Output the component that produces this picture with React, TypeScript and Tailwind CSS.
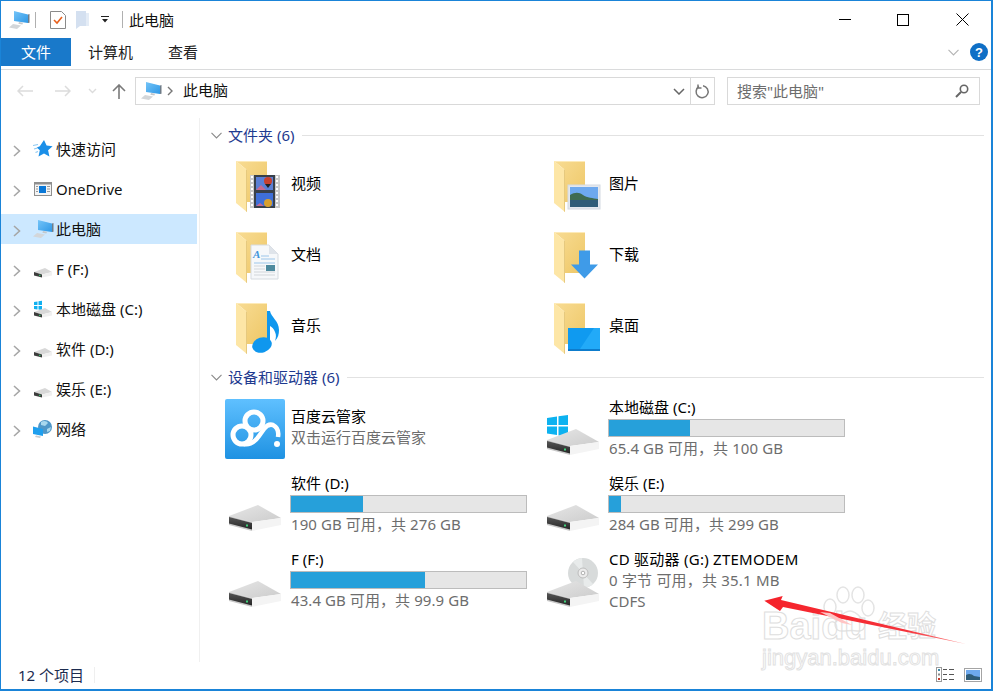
import React from "react";

const Chevron = () => (
  <svg width="8" height="12" viewBox="0 0 8 12" className="shrink-0" fill="none" stroke="#a6a6a6" strokeWidth="1.6">
    <path d="M1 1l5.500 5L1 11" />
  </svg>
);

const ChevronDown = ({ color = "#8a8a8a", w = 11 }: { color?: string; w?: number }) => (
  <svg width={w} height="7" viewBox="0 0 11 7" fill="none" stroke={color} strokeWidth="1.1">
    <path d="M.5 .8L5.500 6l5-5.200" />
  </svg>
);

const Computer = () => (
  <svg width="21" height="18" viewBox="0 0 21 18">
    <defs>
      <linearGradient id="cm" x1="0" y1="0" x2="1" y2="1">
        <stop offset="0" stopColor="#74c4f8" />
        <stop offset="1" stopColor="#2f98e6" />
      </linearGradient>
    </defs>
    <path d="M5 0l14 3.500v8.500L5 10z" fill="url(#cm)" />
    <path d="M19 3.500l1.500-.4v8.700L19 12z" fill="#6f7c88" />
    <path d="M10 11l4 .7-.6 1.800-4-.7z" fill="#c4c8cc" />
    <path d="M4 13l8 1.500-4 3.500L0 16.500z" fill="#d3d6d9" />
  </svg>
);

const SmallDrive = ({ win }: { win?: boolean }) => (
  <svg width="20" height="20" viewBox="0 0 20 20">
    {win && (
      <g fill="#10b0f0">
        <path d="M1 3l3.500-.5V6H1zM5.500 2.300L9 1.800V6H5.500zM1 7h3.500v3.500L1 10zM5.500 7H9v4l-3.500-.5z" />
      </g>
    )}
    <path d="M1 13l11-4 7 4-10 2.500z" fill="#d8d8d8" />
    <path d="M1 13v3.500l8 2v-3z" fill="#3c3c3c" />
    <path d="M9 15.500l10-2.500v3.500l-10 2z" fill="#f0f0f0" />
    <rect x="6" y="15.800" width="1.500" height="1.200" fill="#38c26a" />
  </svg>
);

const Star = () => (
  <svg width="20" height="18" viewBox="0 0 20 18">
    <path d="M11 0l2.600 5.600 6 .7-4.500 4 1.300 6.200L11 13.400 5.500 16.500l1.300-6.200-3-2.700 3-1.300z" fill="#1a8fe8" />
    <path d="M0 5.500l5-1M1 9l3.500-1M2.500 12.500l2.500-1" stroke="#8cc8f2" strokeWidth="1.200" />
  </svg>
);

const OneDrive = () => (
  <svg width="18" height="14" viewBox="0 0 18 14">
    <rect x=".5" y=".5" width="17" height="13" fill="#f4f4f4" stroke="#8f8f8f" />
    <rect x="1" y="1" width="16" height="1.500" fill="#8f8f8f" />
    <rect x="5" y="4" width="7" height="7" fill="#0a78d7" />
    <path d="M2 4.500h2M2 7h2M2 9.500h2M13 4.500h3M13 7h3M13 9.500h3" stroke="#9a9a9a" />
  </svg>
);

const Network = () => (
  <svg width="20" height="19" viewBox="0 0 20 19">
    <circle cx="12" cy="7" r="7" fill="#4f97c8" />
    <path d="M8 2c3-2 6-1 7 1l-3 3-4-1zM14 9l4-2-1 4-3 1z" fill="#a8d8ee" />
    <path d="M0 6.500l10 2.500v7L0 14z" fill="#1f9fee" />
    <path d="M3 15.500l5 1-1 1.500-5-1z" fill="#c8ccd0" />
  </svg>
);

const Folder = ({ children }: { children?: React.ReactNode }) => (
  <svg width="60" height="60" viewBox="0 0 60 60" className="shrink-0">
    <defs>
      <linearGradient id="fb" x1="0" y1="0" x2="1" y2="1">
        <stop offset="0" stopColor="#f8dc94" />
        <stop offset="1" stopColor="#eec766" />
      </linearGradient>
    </defs>
    <path d="M11 5h31v41H22V14z" fill="url(#fb)" />
    <path d="M11 5h31v1H12z" fill="#fdeab8" />
    <path d="M11 5l11 9v42l-11-9z" fill="#fde6a6" />
    <path d="M22 14v42l-1-.7V13z" fill="#e6c97e" />
    {children}
  </svg>
);

const Video = () => (
  <g>
    <rect x="25" y="19" width="30" height="33" fill="#c9c9c9" />
    <rect x="29" y="19" width="21" height="33" fill="#38404a" />
    <rect x="31" y="21" width="17" height="13" fill="#5b7fd6" />
    <rect x="31" y="37" width="17" height="13" fill="#3f6fd8" />
    <circle cx="43" cy="25" r="4" fill="#c8402e" />
    <path d="M40 28l3 4 3-4z" fill="#222" />
    <circle cx="43" cy="47" r="4" fill="#d8a02e" />
    <path d="M31 34l5-5 5 5zM31 50l4-3 4 3z" fill="#c46a92" />
    <path d="M26 21h2M26 25h2M26 29h2M26 33h2M26 37h2M26 41h2M26 45h2M26 49h2M51 21h2M51 25h2M51 29h2M51 33h2M51 37h2M51 41h2M51 45h2M51 49h2" stroke="#fff" strokeWidth="2" />
  </g>
);

const Doc = () => (
  <g>
    <path d="M26 18h18l9 9v25H26z" fill="#f6f8fa" stroke="#d6dbe0" />
    <path d="M44 18l9 9h-9z" fill="#dfe4ea" />
    <text x="28" y="31" fontSize="11" fontStyle="italic" fontWeight="700" fill="#3f95dc" fontFamily="Liberation Serif, serif">A</text>
    <path d="M36 29h8M36 32h14M29 36h21" stroke="#9cc6ea" />
    <path d="M29 39h11M29 42h11M29 45h21M29 48h21" stroke="#d2d6da" />
    <rect x="41" y="38" width="9" height="6" fill="#4e8a9e" />
  </g>
);

const Music = () => (
  <g fill="#0f97ee">
    <ellipse cx="37" cy="47" rx="10" ry="7.500" transform="rotate(-18 37 47)" />
    <path d="M42 13h3c1 6 9 10 9 19 0 4-1 8-4 11 1-3 1.500-6 0-9-1-3-3-5-5-6v20h-3z" />
  </g>
);

const Picture = () => (
  <g>
    <rect x="25" y="29" width="32" height="24" fill="#e4e8ee" stroke="#d4dae2" />
    <rect x="27" y="31" width="28" height="20" fill="#6ea9ee" />
    <path d="M27 39c5-3 9-3 13 0 4 3 10 3 15 4v1H27z" fill="#3f6b50" />
    <rect x="27" y="44" width="28" height="7" fill="#2f5c78" />
  </g>
);

const Down = () => <path d="M36 23.500h11v14h8L41.500 51.500 28 37.500h8z" fill="#3f9be8" />;

const Desktop = () => (
  <g>
    <rect x="25" y="30" width="32" height="23" fill="#0f9af0" />
    <path d="M37 51l14-21h6v21z" fill="#2bb0fb" opacity=".7" />
    <rect x="25" y="51" width="32" height="2" fill="#0d7ccc" />
  </g>
);

const Drive = ({ children }: { children?: React.ReactNode }) => (
  <svg width="60" height="60" viewBox="0 0 60 60" className="shrink-0">
    <defs>
      <linearGradient id="dt" x1="0" y1="0" x2="1" y2="1">
        <stop offset="0" stopColor="#e6e6e6" />
        <stop offset="1" stopColor="#cccccc" />
      </linearGradient>
      <linearGradient id="df" x1="0" y1="0" x2="0" y2="1">
        <stop offset="0" stopColor="#555" />
        <stop offset="1" stopColor="#262626" />
      </linearGradient>
    </defs>
    {children}
    <path d="M4 43l29-11 23 13-29 4z" fill="url(#dt)" />
    <path d="M4 43l23 6v9L4 52z" fill="#c8c8c8" />
    <path d="M4 44l23 6v6.500L4 50.500z" fill="url(#df)" />
    <path d="M27 49l29-4v7l-29 6z" fill="#f4f4f4" />
    <rect x="21" y="51.500" width="2" height="2" fill="#3fd07a" />
  </svg>
);

const WinLogo = () => (
  <path d="M4 21l10-1.500V28H4zM15.500 19.300L25 18v10h-9.500zM4 29.500h10V38L4 36.500zM15.500 29.500H25V40l-9.500-1.500z" fill="#0db2f0" />
);

const Cd = () => (
  <g>
    <circle cx="40" cy="24" r="15" fill="#d8dbdb" />
    <path d="M40 24L30 13a15 15 0 0 1 9-4zM40 24l10 11a15 15 0 0 1-9 4z" fill="#e8ebeb" />
    <circle cx="40" cy="24" r="5" fill="#ececec" stroke="#bcbcbc" />
    <circle cx="40" cy="24" r="1.800" fill="#fff" stroke="#b0b0b0" />
  </g>
);

const BaiduCloud = () => (
  <svg width="60" height="60" viewBox="0 0 60 60" className="shrink-0">
    <defs>
      <linearGradient id="bc" x1="0" y1="0" x2="0" y2="1">
        <stop offset="0" stopColor="#5fc0ff" />
        <stop offset="1" stopColor="#1f92e2" />
      </linearGradient>
    </defs>
    <rect width="60" height="60" rx="2" fill="url(#bc)" />
    <circle cx="17" cy="36" r="9" fill="none" stroke="#fff" strokeWidth="5" />
    <circle cx="29" cy="22" r="9" fill="none" stroke="#fff" strokeWidth="5" />
    <path d="M19 45c6 1 11-2 15-8l5-7c3-4 6-5 9-4 4 2 6 6 5 12" fill="none" stroke="#fff" strokeWidth="4.500" />
    <circle cx="52" cy="45" r="3" fill="#fff" />
  </svg>
);

const ViewIcons = () => (
  <div className="flex items-center gap-[9px] pr-[9px]">
    <svg width="19" height="15" viewBox="0 0 19 15" fill="none">
      <rect x=".5" y=".5" width="5" height="14" stroke="#9a9a9a" />
      <rect x="2" y="2" width="2" height="2" fill="#3c8aa8" />
      <rect x="2" y="6.500" width="2" height="2" fill="#888" />
      <rect x="2" y="11" width="2" height="2" fill="#c83a2a" />
      <path d="M7 2.500h4M13 2.500h5M7 7.500h4M13 7.500h5M7 12.500h4M13 12.500h5" stroke="#555" />
    </svg>
    <svg width="18" height="14" viewBox="0 0 18 14">
      <rect x=".5" y=".5" width="17" height="13" fill="#fff" stroke="#a4a4a4" />
      <rect x="2" y="2" width="14" height="10" fill="#6ea9ee" />
      <path d="M2 7c3-2 6-1 8 1l6 1v3H2z" fill="#2f5c78" />
    </svg>
  </div>
);

const sidebar: { label: string; icon: React.ReactNode; selected?: boolean }[] = [
  { label: "快速访问", icon: <Star /> },
  { label: "OneDrive", icon: <OneDrive /> },
  { label: "此电脑", icon: <Computer />, selected: true },
  { label: "F (F:)", icon: <SmallDrive /> },
  { label: "本地磁盘 (C:)", icon: <SmallDrive win /> },
  { label: "软件 (D:)", icon: <SmallDrive /> },
  { label: "娱乐 (E:)", icon: <SmallDrive /> },
  { label: "网络", icon: <Network /> },
];

const SectionHeader = ({ title }: { title: string }) => (
  <div className="flex h-5 items-center pl-[11px] pr-[7px]">
    <ChevronDown />
    <span className="ml-[6px] leading-5 text-[#1e3a8f]">{title}</span>
    <div className="ml-[8px] h-px flex-1 bg-[#e2e2e2]" />
  </div>
);

const FolderItem = ({ label, children }: { label: string; children: React.ReactNode }) => (
  <div className="flex h-[71px] w-[318px] items-center">
    <Folder>{children}</Folder>
    <span className="mb-[6px] ml-[6px] leading-5 text-black">{label}</span>
  </div>
);

const DriveItem = ({
  label,
  sub,
  pct,
  children,
}: {
  label: string;
  sub: string;
  pct: number;
  children?: React.ReactNode;
}) => (
  <div className="flex h-[76px] w-[318px]">
    <Drive>{children}</Drive>
    <div className="ml-[5px] flex w-[237px] flex-col">
      <div className="ml-px h-5 leading-5 text-black">{label}</div>
      <div className="mt-[2px] h-[18px] border border-[#bcbcbc] bg-[#e6e6e6]">
        <div className="h-full bg-[#26a0da]" style={{ width: `${pct}%` }} />
      </div>
      <div className="ml-px mt-px h-5 leading-5 tracking-[.08px] text-[#6d6d6d]">{sub}</div>
    </div>
  </div>
);

const Watermark = () => (
  <>
    <svg width="60" height="48" viewBox="0 0 60 48" className="absolute left-[822px] top-[586px]" fill="none" stroke="#e4e4e4" strokeWidth="1.500">
      <ellipse cx="8" cy="21" rx="6" ry="8" />
      <ellipse cx="21" cy="9" rx="6" ry="8" />
      <ellipse cx="36" cy="9" rx="6" ry="8" />
      <ellipse cx="46" cy="22" rx="6" ry="8" />
      <path d="M28 25c-6 0-9 5-13 9-4 5-1 12 6 11 4 0 10-1 14 0 7 1 10-6 6-11-4-4-7-9-13-9z" />
    </svg>
    <div className="absolute left-[762px] top-[604px] text-[38px] font-bold leading-[44px] text-transparent [font-family:'Liberation_Sans',sans-serif] [-webkit-text-stroke:1px_#dedede]">
      Baidu
    </div>
    <div className="absolute left-[878px] top-[605px] text-[29px] font-bold leading-[38px] text-transparent [font-family:'Noto_Sans_CJK_SC',sans-serif] [-webkit-text-stroke:1px_#dedede]">
      经验
    </div>
    <div className="absolute left-[762px] top-[645px] text-[22px] leading-[26px] text-transparent [font-family:'Liberation_Sans',sans-serif] [-webkit-text-stroke:1px_#e2e2e2]">
      jingyan.baidu.com
    </div>
    <svg width="993" height="691" viewBox="0 0 993 691" className="pointer-events-none absolute left-0 top-0">
      <defs>
        <linearGradient id="ar" x1="764" y1="0" x2="966" y2="0" gradientUnits="userSpaceOnUse">
          <stop offset="0" stopColor="#f5222a" />
          <stop offset=".7" stopColor="#f5323a" />
          <stop offset="1" stopColor="#ff8a8a" />
        </linearGradient>
      </defs>
      <path d="M764.300 600.700L782.700 596 781 600 966 644 783 607 780 611z" fill="url(#ar)" />
      <path d="M820 612l10 1 22 12-10-2z" fill="#ffc4c4" />
    </svg>
  </>
);

export default function App() {
  return (
    <div className="relative flex h-[691px] w-[993px] flex-col overflow-hidden border-b-2 border-l border-r-2 border-t border-[#1a84d8] bg-white text-[15px] [font-family:'Noto_Sans','Noto_Sans_CJK_SC',sans-serif]">
      {/* Title bar */}
      <div className="flex h-[37px] shrink-0 items-center">
        <div className="ml-[8px]">
          <Computer />
        </div>
        <div className="ml-[5px] h-[16px] w-px bg-[#b0b0b0]" />
        <svg width="16" height="18" viewBox="0 0 16 18" className="ml-[14px]">
          <path d="M.5.500h11l4 4v13H.5z" fill="#fff" stroke="#8a8a8a" />
          <path d="M4 9l3 3 5-6" fill="none" stroke="#e8601c" strokeWidth="1.600" />
        </svg>
        <svg width="14" height="18" viewBox="0 0 14 18" className="ml-[10px]">
          <path d="M0 0h10v15H4l-4 3z" fill="#d4e0f0" />
          <path d="M10 2h3v13h-3z" fill="#e4ecf6" />
        </svg>
        <svg width="8" height="7" viewBox="0 0 8 7" className="ml-[11px]">
          <path d="M0 0h8v1H0zM1 3h6L4 6.500z" fill="#222" />
        </svg>
        <div className="ml-[13px] h-[17px] w-px bg-[#b0b0b0]" />
        <span className="ml-[6px] leading-5 text-[#111]">此电脑</span>
        <div className="ml-auto flex items-center">
          <div className="mr-[46px] h-px w-[12px] bg-black" />
          <div className="mr-[47px] h-[12px] w-[12px] border border-black" />
          <svg width="13" height="13" viewBox="0 0 13 13" className="mr-[22px]" stroke="#000" strokeWidth="1">
            <path d="M.5.500l12 12M12.500.500l-12 12" />
          </svg>
        </div>
      </div>

      {/* Ribbon tabs */}
      <div className="flex h-[28px] shrink-0 items-center">
        <div className="flex h-full w-[70px] items-center justify-center bg-[#1979ca] text-white">文件</div>
        <span className="ml-[17px] text-[#222]">计算机</span>
        <span className="ml-[35px] text-[#222]">查看</span>
        <div className="ml-auto flex items-center">
          <ChevronDown color="#b4b4b4" w={13} />
          <div className="ml-[10px] mr-[3px] flex h-[18px] w-[18px] items-center justify-center rounded-full bg-[#0f6fc6] text-[13px] font-bold leading-none text-white [font-family:'Liberation_Sans',sans-serif]">
            ?
          </div>
        </div>
      </div>
      <div className="mt-[3px] h-px shrink-0 bg-[#dadbdc]" />

      {/* Address bar */}
      <div className="flex h-[48px] shrink-0 items-start pt-[7px]">
        <div className="flex h-[28px] w-[134px] shrink-0 items-center">
          <svg width="16" height="12" viewBox="0 0 16 12" className="ml-[16px]" fill="none" stroke="#dcdcdc" strokeWidth="1.500">
            <path d="M16 6H1M6 1L1 6l5 5" />
          </svg>
          <svg width="16" height="12" viewBox="0 0 16 12" className="ml-[22px]" fill="none" stroke="#dcdcdc" strokeWidth="1.500">
            <path d="M0 6h15M10 1l5 5-5 5" />
          </svg>
          <svg width="9" height="6" viewBox="0 0 9 6" className="ml-[17px]" fill="none" stroke="#dcdcdc" strokeWidth="1.400">
            <path d="M1 1l3.500 3.500L8 1" />
          </svg>
          <svg width="14" height="15" viewBox="0 0 14 15" className="ml-[15px]" fill="none" stroke="#7a7a7a" strokeWidth="1.600">
            <path d="M7 15V1M1 7l6-6 6 6" />
          </svg>
        </div>
        <div className="flex h-[28px] w-[580px] shrink-0 items-center border border-[#d9d9d9]">
          <div className="ml-[5px]">
            <Computer />
          </div>
          <div className="ml-[5px] mr-[10px]">
            <svg width="6" height="10" viewBox="0 0 6 10" fill="none" stroke="#777" strokeWidth="1.400">
              <path d="M1 1l4 4-4 4" />
            </svg>
          </div>
          <span className="mb-px text-[#111]">此电脑</span>
          <div className="ml-auto flex h-full items-center">
            <svg width="12" height="7" viewBox="0 0 12 7" className="mr-[5px]" fill="none" stroke="#666" strokeWidth="1.500">
              <path d="M1 1l5 5 5-5" />
            </svg>
            <div className="flex h-full w-[24px] items-center justify-center border-l border-[#d9d9d9]">
              <svg width="15" height="15" viewBox="0 0 15 15" fill="none" stroke="#777" strokeWidth="1.500">
                <path d="M4 2.500a6 6 0 1 0 4-.800" />
                <path d="M3 .500v3.500h3.500" />
              </svg>
            </div>
          </div>
        </div>
        <div className="ml-[12px] flex h-[28px] w-[253px] shrink-0 items-center border border-[#d9d9d9] pl-[9px]">
          <span className="text-[#6d6d6d]">搜索"此电脑"</span>
          <svg width="14" height="14" viewBox="0 0 14 14" className="ml-auto mr-[10px]" fill="none" stroke="#666">
            <circle cx="9" cy="5" r="3.700" strokeWidth="1.600" />
            <path d="M6 8l-5 5" strokeWidth="2" />
          </svg>
        </div>
      </div>

      {/* Body */}
      <div className="flex min-h-0 flex-1">
        <div className="w-[199px] shrink-0 border-r border-[#f0f0f0] pt-[16px]">
          {sidebar.map((s) => (
            <div
              key={s.label}
              className={`mb-[10px] flex h-[30px] w-[196px] items-center ${s.selected ? "bg-[#cce8ff]" : ""}`}
            >
              <div className="ml-[12px] mt-[3px]">
                <Chevron />
              </div>
              <div className="ml-[10px] flex w-[24px] shrink-0 items-center justify-center">{s.icon}</div>
              <span className="ml-px leading-5 text-[#111]">{s.label}</span>
            </div>
          ))}
        </div>
        <div className="flex-1 pt-[7px]">
          <SectionHeader title="文件夹 (6)" />
          <div className="ml-[25px] mt-[5px] grid grid-cols-[318px_318px]">
            <FolderItem label="视频"><Video /></FolderItem>
            <FolderItem label="图片"><Picture /></FolderItem>
            <FolderItem label="文档"><Doc /></FolderItem>
            <FolderItem label="下载"><Down /></FolderItem>
            <FolderItem label="音乐"><Music /></FolderItem>
            <FolderItem label="桌面"><Desktop /></FolderItem>
          </div>
          <div className="mt-[4px]">
            <SectionHeader title="设备和驱动器 (6)" />
          </div>
          <div className="ml-[25px] mt-[10px] grid grid-cols-[318px_318px]">
            <div className="flex h-[76px] w-[318px]">
              <div className="mt-[2px]">
                <BaiduCloud />
              </div>
              <div className="ml-[6px] flex flex-col pt-[9px]">
                <div className="h-5 leading-5 text-black">百度云管家</div>
                <div className="mt-px h-5 leading-5 text-[#6d6d6d]">双击运行百度云管家</div>
              </div>
            </div>
            <DriveItem label="本地磁盘 (C:)" sub="65.4 GB 可用，共 100 GB" pct={34.6}>
              <WinLogo />
            </DriveItem>
            <DriveItem label="软件 (D:)" sub="190 GB 可用，共 276 GB" pct={30.6} />
            <DriveItem label="娱乐 (E:)" sub="284 GB 可用，共 299 GB" pct={5} />
            <DriveItem label="F (F:)" sub="43.4 GB 可用，共 99.9 GB" pct={57} />
            <div className="flex h-[76px] w-[318px]">
              <Drive>
                <Cd />
              </Drive>
              <div className="ml-[6px] flex flex-col">
                <div className="h-5 leading-5 tracking-[.25px] text-black">CD 驱动器 (G:) ZTEMODEM</div>
                <div className="mt-px h-5 leading-5 tracking-[.2px] text-[#6d6d6d]">0 字节 可用，共 35.1 MB</div>
                <div className="mt-px h-5 leading-5 text-[#6d6d6d]">CDFS</div>
              </div>
            </div>
          </div>
        </div>
      </div>

      {/* Status bar */}
      <div className="flex h-[27px] shrink-0 items-center pb-[2px]">
        <span className="ml-[17px] leading-5 text-[#1c2c50]">12 个项目</span>
        <div className="ml-[10px] h-[16px] w-px bg-[#efefef]" />
        <div className="ml-auto">
          <ViewIcons />
        </div>
      </div>

      <div className="absolute left-[-1px] top-[-1px] h-[691px] w-[993px]">
        <Watermark />
      </div>
    </div>
  );
}
